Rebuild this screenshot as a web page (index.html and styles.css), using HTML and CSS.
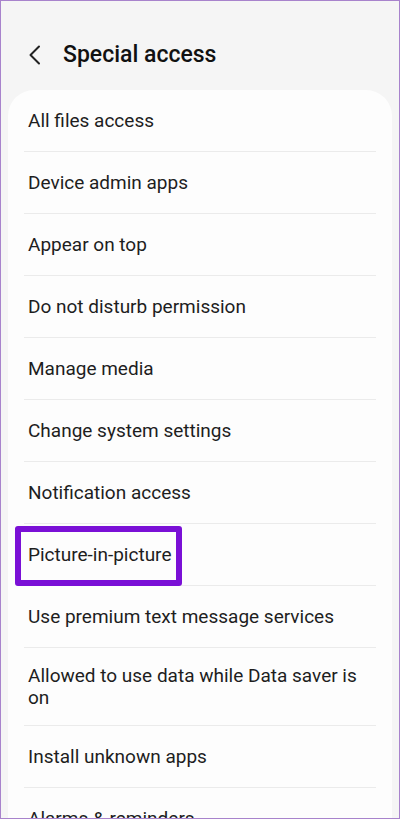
FILE: index.html
```html
<!DOCTYPE html>
<html>
<head>
<meta charset="utf-8">
<link rel="stylesheet" href="styles.css">
</head>
<body>
<div class="frame">
  <header class="header">
    <svg class="back" width="14" height="20" viewBox="0 0 14 20"><path d="M11 1.5 L2.5 10 L11 18.5" fill="none" stroke="#222" stroke-width="2" stroke-linecap="round" stroke-linejoin="round"/></svg>
    <h1 class="title">Special access</h1>
  </header>
  <div class="card">
    <div class="row"><span>All files access</span></div>
    <div class="row"><span>Device admin apps</span></div>
    <div class="row"><span>Appear on top</span></div>
    <div class="row"><span>Do not disturb permission</span></div>
    <div class="row"><span>Manage media</span></div>
    <div class="row"><span>Change system settings</span></div>
    <div class="row"><span>Notification access</span></div>
    <div class="row highlighted"><span>Picture-in-picture</span><div class="mark"></div></div>
    <div class="row"><span>Use premium text message services</span></div>
    <div class="row two"><span>Allowed to use data while Data saver is on</span></div>
    <div class="row"><span>Install unknown apps</span></div>
    <div class="row"><span>Alarms &amp; reminders</span></div>
  </div>
</div>
</body>
</html>
```
FILE: styles.css
```css
html, body {
  margin: 0;
  padding: 0;
}
body {
  font-family: Roboto, "Noto Sans", sans-serif;
  color: #1e1e1e;
}
.frame {
  width: 400px;
  height: 819px;
  box-sizing: border-box;
  border: 1px solid #a883cc;
  background: #f5f5f5;
  overflow: hidden;
}
.header {
  height: 89px;
  display: flex;
  align-items: center;
  padding-left: 27px;
  padding-top: 18px;
  box-sizing: border-box;
}
.back {
  display: block;
  margin-right: 21px;
}
.title {
  margin: 0;
  font-size: 23px;
  font-weight: 500;
  color: #111;
  letter-spacing: 0;
}
.card {
  margin: 0 7px;
  background: #fdfdfd;
  border-radius: 26px 26px 0 0;
}
.row {
  position: relative;
  margin: 0 16px;
  padding: 20px 4px 19px;
  font-size: 19px;
  line-height: 22px;
  border-bottom: 1px solid #ebebeb;
}
.row.two {
  padding: 17px 4px 16px;
}
.mark {
  position: absolute;
  left: -9px;
  top: 2px;
  width: 167px;
  height: 60px;
  box-sizing: border-box;
  border: 6px solid #7a10d6;
  border-radius: 3px;
}
```
